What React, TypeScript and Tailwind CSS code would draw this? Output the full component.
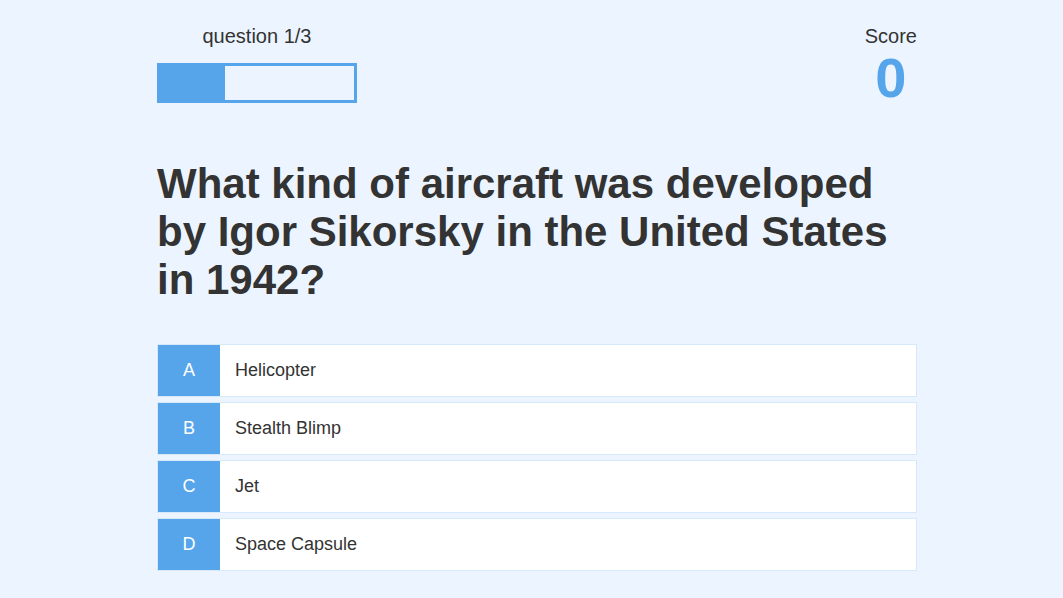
export default function App() {
  const choices = [
    { prefix: "A", text: "Helicopter" },
    { prefix: "B", text: "Stealth Blimp" },
    { prefix: "C", text: "Jet" },
    { prefix: "D", text: "Space Capsule" },
  ];

  return (
    <div className="min-h-screen bg-[#ecf5ff] text-[#333] font-['Liberation_Sans',Arial,sans-serif]">
      <div className="w-[760px] ml-[157px] pt-[24px]">
        {/* HUD */}
        <div className="flex justify-between">
          <div className="w-[200px]">
            <p className="text-center text-[20px] leading-[24px]">question 1/3</p>
            <div className="mt-[15px] h-[40px] border-[3px] border-[#56a5eb]">
              <div className="h-full w-1/3 bg-[#56a5eb]"></div>
            </div>
          </div>
          <div className="text-center">
            <p className="text-[20px] leading-[24px]">Score</p>
            <p className="text-[56px] leading-[60px] font-bold text-[#56a5eb]">0</p>
          </div>
        </div>

        {/* Question */}
        <h2 className="mt-[52px] mb-[40px] text-[42px] leading-[48px] font-bold">
          What kind of aircraft was developed by Igor Sikorsky in the United States in 1942?
        </h2>

        {/* Choices */}
        <div className="flex flex-col gap-[5px]">
          {choices.map((c) => (
            <div
              key={c.prefix}
              className="flex bg-white border border-[#d6e9f9] text-[18px] leading-[21px] cursor-pointer"
            >
              <p className="w-[62px] py-[15px] text-center bg-[#56a5eb] text-white">{c.prefix}</p>
              <p className="py-[15px] px-[15px]">{c.text}</p>
            </div>
          ))}
        </div>
      </div>
    </div>
  );
}
